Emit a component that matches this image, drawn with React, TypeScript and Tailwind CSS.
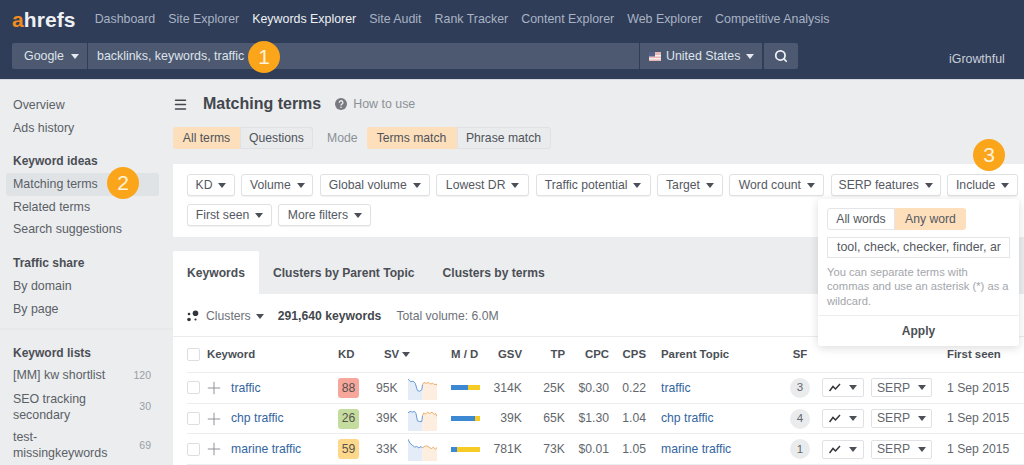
import React from "react";
import { Menu, Search, Plus } from "lucide-react";

const FONT = "[font-family:'Liberation_Sans',Arial,sans-serif]";
const ROW = "grid grid-cols-[20px_131px_38px_32px_43px_34px_37px_43px_44px_37px_139px_30px_56px_76px_77px]";

function Caret({ className = "text-[#4b5058]" }: { className?: string }) {
  return (
    <svg width="8" height="5" viewBox="0 0 8 5" className={`shrink-0 ${className}`}>
      <path d="M0 0h8L4 5z" fill="currentColor" />
    </svg>
  );
}

function Badge({ n, className }: { n: number; className: string }) {
  return (
    <div className={`absolute flex h-8 w-8 items-center justify-center rounded-full bg-[#fba51b] text-[21px] text-[#fff3dd] ${className}`}>
      {n}
    </div>
  );
}

function FilterBtn({ label, w }: { label: string; w: string }) {
  return (
    <div className={`flex h-[22px] items-center justify-center gap-[6px] rounded-[3px] border border-[#dfe1e4] bg-white text-[12.2px] text-[#55595f] shadow-[0_1px_1px_rgba(0,0,0,0.06)] ${w}`}>
      {label}
      <Caret />
    </div>
  );
}

function SideItem({ children, active, count }: { children: React.ReactNode; active?: boolean; count?: string }) {
  return (
    <div className={`-ml-[7px] flex h-[22.7px] w-[153px] items-center justify-between rounded-[3px] pl-[7px] pr-[8px] text-[12.4px] text-[#5b5f66] ${active ? "bg-[#e0e3e6]" : ""}`}>
      <span>{children}</span>
      {count && <span className="text-[10.5px] text-[#9a9ea4]">{count}</span>}
    </div>
  );
}

function SideHead({ children, className }: { children: React.ReactNode; className: string }) {
  return <div className={`flex h-[23px] items-center text-[12px] font-bold text-[#4b4f55] ${className}`}>{children}</div>;
}

function Spark({ variant }: { variant: number }) {
  const blue = [
    "M0 4 L4 8 L7 7 L10 10 L13 20 L16 21 L19 19 L20 12",
    "M0 8 L3 6 L6 7 L9 6 L11 9 L13 19 L16 20 L19 20 L20 12",
    "M0 3 L3 9 L6 11 L9 14 L12 13 L15 15 L18 13 L20 15",
  ][variant];
  const orange = [
    "M20 12 L22 9 L25 10 L28 9 L31 11 L34 10 L37 12 L39 11 L40 13",
    "M20 12 L22 8 L24 10 L27 7 L30 9 L33 7 L36 10 L38 9 L40 13",
    "M20 15 L23 13 L26 12 L29 14 L32 16 L35 14 L38 17 L40 14",
  ][variant];
  return (
    <svg width="29" height="24" viewBox="0 0 40 33" preserveAspectRatio="none">
      <path d={`${blue} V33 H0 Z`} fill="#e4edf7" />
      <path d={`${orange} V33 H20 Z`} fill="#fdeedf" />
      <path d={blue} fill="none" stroke="#5b94d6" strokeWidth="1.3" />
      <path d={orange} fill="none" stroke="#eda862" strokeWidth="1.3" />
    </svg>
  );
}

function Check() {
  return <div className="h-[13px] w-[13px] rounded-[2px] border border-[#dcdee1] bg-white" />;
}

function TrendBtn() {
  return (
    <div className="flex h-[19px] w-[42px] items-center justify-center gap-[8px] rounded-[2px] border border-[#dfe1e4]">
      <svg width="12" height="9" viewBox="0 0 12 9" fill="none" stroke="#33363b" strokeWidth="1.5">
        <path d="M0.5 8 L4 3.5 L6.5 6 L11 1" />
      </svg>
      <Caret />
    </div>
  );
}

const rows = [
  { k: "traffic", kd: "88", kdc: "bg-[#f6a69b]", sv: "95K", blue: 60, gsv: "314K", tp: "25K", cpc: "$0.30", cps: "0.22", sf: "3" },
  { k: "chp traffic", kd: "26", kdc: "bg-[#c5dc9f]", sv: "39K", blue: 83, gsv: "39K", tp: "65K", cpc: "$1.30", cps: "1.04", sf: "4" },
  { k: "marine traffic", kd: "59", kdc: "bg-[#fdd88a]", sv: "33K", blue: 20, gsv: "781K", tp: "73K", cpc: "$0.01", cps: "1.05", sf: "1" },
];

function Head({ children, className = "" }: { children: React.ReactNode; className?: string }) {
  return <div className={`flex items-center text-[11.4px] font-bold text-[#4b4f55] ${className}`}>{children}</div>;
}

export default function App() {
  const nav = ["Dashboard", "Site Explorer", "Keywords Explorer", "Site Audit", "Rank Tracker", "Content Explorer", "Web Explorer", "Competitive Analysis"];
  return (
    <div className={`relative h-[465px] w-[1024px] overflow-hidden bg-[#ebedef] ${FONT}`}>
      {/* Header */}
      <header className="h-[80px] border-b border-[#d5d9e0] bg-[#2f3d58]">
        <div className="flex h-[38px] items-center pl-[12px]">
          <div className="mr-[19px] flex text-[21px] font-bold leading-none tracking-[0.1px] text-[#eef0f3]">
            <span className="text-[#f08c21]">a</span>hrefs
          </div>
          <nav className="flex gap-[13px] text-[12.4px]">
            {nav.map((n) => (
              <span key={n} className={n === "Keywords Explorer" ? "text-[#eef0f4]" : "text-[#a9b3c4]"}>{n}</span>
            ))}
          </nav>
        </div>
        <div className="mt-[5px] flex h-[26px] pl-[12px] text-[12.4px] text-[#dfe3ea]">
          <div className="flex w-[75px] items-center gap-[7px] rounded-l-[2px] bg-[#4c5971] pl-[12px]">
            Google <Caret className="text-[#e6e9ee]" />
          </div>
          <div className="ml-px flex w-[551px] items-center bg-[#4c5971] pl-[9px]">backlinks, keywords, traffic</div>
          <div className="ml-px flex w-[122px] items-center gap-[5px] bg-[#4c5971] pl-[9px]">
            <svg width="12" height="9" viewBox="0 0 12 9" className="shrink-0">
              <rect width="12" height="9" fill="#e9b7b5" />
              <rect y="3" width="12" height="1.5" fill="#f5eeee" />
              <rect y="6" width="12" height="1.5" fill="#f5eeee" />
              <rect width="6" height="4.5" fill="#56618a" />
            </svg>
            United States
            <Caret className="ml-[1px] text-[#e6e9ee]" />
          </div>
          <div className="ml-[2px] flex w-[34px] items-center justify-center rounded-r-[2px] bg-[#4c5971]">
            <Search size={14} strokeWidth={3} className="text-[#eef0f4]" />
          </div>
          <div className="ml-[151px] mt-[7px] text-[12.4px] text-[#c9cfd9]">iGrowthful</div>
        </div>
      </header>

      <div className="flex">
        {/* Sidebar */}
        <aside className="flex h-[385px] w-[173px] shrink-0 flex-col pl-[13px] pt-[14px]">
          <SideItem>Overview</SideItem>
          <SideItem>Ads history</SideItem>
          <SideHead className="mt-[10.5px]">Keyword ideas</SideHead>
          <SideItem active>Matching terms</SideItem>
          <SideItem>Related terms</SideItem>
          <SideItem>Search suggestions</SideItem>
          <SideHead className="mt-[11px]">Traffic share</SideHead>
          <SideItem>By domain</SideItem>
          <SideItem>By page</SideItem>
          <div className="-ml-[13px] mt-[8px] h-[2px] bg-[#e6e8ea]" />
          <SideHead className="mt-[11px]">Keyword lists</SideHead>
          <SideItem count="120">[MM] kw shortlist</SideItem>
          <div className="mt-[5px] flex w-[138px] items-center justify-between text-[12.4px] leading-[15.5px] text-[#5b5f66]">
            <span>SEO tracking<br />secondary</span>
            <span className="-mt-[1px] text-[10.5px] text-[#9a9ea4]">30</span>
          </div>
          <div className="mt-[7px] flex w-[138px] items-center justify-between text-[12.4px] leading-[15.5px] text-[#5b5f66]">
            <span>test-<br />missingkeywords</span>
            <span className="text-[10.5px] text-[#9a9ea4]">69</span>
          </div>
        </aside>

        {/* Main */}
        <main className="min-w-0 flex-1">
          <div className="flex h-[47px] items-center pt-[1px]">
            <Menu size={15} strokeWidth={2.4} className="text-[#44484e]" />
            <h1 className="ml-[15px] text-[16px] font-bold text-[#43474d]">Matching terms</h1>
            <svg width="12" height="12" viewBox="0 0 12 12" className="ml-[14px]">
              <circle cx="6" cy="6" r="6" fill="#777b81" />
              <path d="M4.3 4.7a1.8 1.8 0 1 1 2.6 1.5c-.6.3-.9.6-.9 1.2" fill="none" stroke="#ebedef" strokeWidth="1.3" />
              <circle cx="6" cy="9.2" r=".8" fill="#ebedef" />
            </svg>
            <span className="ml-[6px] text-[12.4px] text-[#8d9197]">How to use</span>
          </div>

          <div className="flex h-[22px] items-center text-[12.2px] text-[#4f5359]">
            <div className="flex h-full w-[67px] items-center justify-center rounded-l-[3px] bg-[#fddfbc]">All terms</div>
            <div className="flex h-full w-[73px] items-center justify-center rounded-r-[3px] border border-[#dfe1e4] bg-[#e9ebed]">Questions</div>
            <span className="ml-[14px] text-[#8d9197]">Mode</span>
            <div className="ml-[9px] flex h-full w-[90px] items-center justify-center rounded-l-[3px] bg-[#fddfbc]">Terms match</div>
            <div className="flex h-full w-[94px] items-center justify-center rounded-r-[3px] border border-[#dfe1e4] bg-[#e9ebed]">Phrase match</div>
          </div>

          <section className="mt-[15px] flex h-[73px] flex-wrap content-start gap-x-[6.4px] gap-y-[8px] bg-white pl-[14px] pt-[10px]">
            <FilterBtn label="KD" w="w-[48px]" />
            <FilterBtn label="Volume" w="w-[72px]" />
            <FilterBtn label="Global volume" w="w-[110px]" />
            <FilterBtn label="Lowest DR" w="w-[93px]" />
            <FilterBtn label="Traffic potential" w="w-[115px]" />
            <FilterBtn label="Target" w="w-[66px]" />
            <FilterBtn label="Word count" w="w-[95px]" />
            <FilterBtn label="SERP features" w="w-[110px]" />
            <FilterBtn label="Include" w="w-[71px]" />
            <FilterBtn label="First seen" w="w-[85px]" />
            <FilterBtn label="More filters" w="w-[93px]" />
          </section>

          <div className="mt-[14px] flex h-[43px] items-center pt-[1px] text-[12.1px] font-bold text-[#4b4f55]">
            <div className="-mt-[1px] flex h-[43px] w-[86px] items-center justify-center rounded-t-[2px] bg-white pt-[1px]">Keywords</div>
            <span className="ml-[14px]">Clusters by Parent Topic</span>
            <span className="ml-[28px]">Clusters by terms</span>
          </div>

          <section className="bg-white">
            <div className="flex h-[43px] items-center border-b border-[#e9ebed] pl-[14px] pt-[2px] text-[12.2px]">
              <svg width="12" height="12" viewBox="0 0 12 12" className="mr-[7px]">
                <circle cx="8.5" cy="3.2" r="2.8" fill="#33363b" />
                <circle cx="2" cy="4" r="1.3" fill="#33363b" />
                <circle cx="2" cy="9.5" r="1.8" fill="#33363b" />
                <circle cx="8.5" cy="9.5" r="1.1" fill="#33363b" />
              </svg>
              <span className="text-[#6d7177]">Clusters</span>
              <Caret className="ml-[5px] text-[#4b5058]" />
              <span className="ml-[14px] font-bold text-[#44484e]">291,640 keywords</span>
              <span className="ml-[15px] text-[#6d7177]">Total volume: 6.0M</span>
            </div>

            <div className="pl-[14px]">
              <div className={`${ROW} h-[36px] border-b border-[#ebedef]`}>
                <div className="flex items-center"><Check /></div>
                <Head>Keyword</Head>
                <Head>KD</Head>
                <Head className="gap-[3px] pl-[8px]">SV <Caret /></Head>
                <div />
                <Head>M / D</Head>
                <Head className="justify-end">GSV</Head>
                <Head className="justify-end">TP</Head>
                <Head className="justify-end">CPC</Head>
                <Head className="justify-end">CPS</Head>
                <Head className="pl-[15px]">Parent Topic</Head>
                <Head className="justify-center">SF</Head>
                <div />
                <div />
                <Head>First seen</Head>
              </div>

              {rows.map((r, i) => (
                <div key={r.k} className={`${ROW} h-[30.7px] border-b border-[#ebedef] text-[12.2px] text-[#63676d]`}>
                  <div className="flex items-center"><Check /></div>
                  <div className="flex items-center">
                    <Plus size={20} strokeWidth={1.2} className="-ml-[3px] text-[#8f9297]" />
                    <a className="ml-[7px] text-[#33659f]">{r.k}</a>
                  </div>
                  <div className="flex items-center">
                    <span className={`flex h-[20px] w-[21px] items-center justify-center rounded-[3px] text-[#55534f] ${r.kdc}`}>{r.kd}</span>
                  </div>
                  <div className="flex items-center">{r.sv}</div>
                  <div className="flex items-center"><Spark variant={i} /></div>
                  <div className="flex items-center">
                    <div className="flex h-[5px] w-[29px]">
                      <div className="h-full bg-[#3d88d3]" style={{ width: `${r.blue}%` }} />
                      <div className="h-full flex-1 bg-[#f6cb25]" />
                    </div>
                  </div>
                  <div className="flex items-center justify-end">{r.gsv}</div>
                  <div className="flex items-center justify-end">{r.tp}</div>
                  <div className="flex items-center justify-end">{r.cpc}</div>
                  <div className="flex items-center justify-end">{r.cps}</div>
                  <div className="flex items-center pl-[15px]"><a className="text-[#33659f]">{r.k}</a></div>
                  <div className="flex items-center justify-center">
                    <span className="flex h-[20px] w-[20px] items-center justify-center rounded-full bg-[#e9ebed] text-[11.5px]">{r.sf}</span>
                  </div>
                  <div className="flex items-center pl-[7px]"><TrendBtn /></div>
                  <div className="flex items-center">
                    <div className="flex h-[19px] w-[61px] items-center justify-center gap-[8px] rounded-[2px] border border-[#dfe1e4]">SERP <Caret /></div>
                  </div>
                  <div className="flex items-center">1 Sep 2015</div>
                </div>
              ))}
            </div>
          </section>
        </main>
      </div>

      {/* Include popover */}
      <div className="absolute left-[818px] top-[199px] h-[147px] w-[201px] rounded-[3px] bg-white shadow-[0_2px_10px_rgba(0,0,0,0.14)]">
        <div className="ml-[9px] mt-[9px] flex h-[22px] text-[12.2px] text-[#55595f]">
          <div className="flex w-[68px] items-center justify-center rounded-l-[3px] border border-[#e3e5e8]">All words</div>
          <div className="flex w-[71px] items-center justify-center rounded-r-[3px] bg-[#fddfbc]">Any word</div>
        </div>
        <div className="ml-[9px] mt-[7px] flex h-[21px] w-[183px] items-center border border-[#e3e5e8] pl-[9px] text-[12.4px] text-[#55595f]">
          <span className="overflow-hidden whitespace-nowrap">tool, check, checker, finder, ar</span>
        </div>
        <p className="ml-[9px] mt-[7px] text-[11.2px] leading-[14.3px] text-[#a3a6ab]">
          You can separate terms with<br />commas and use an asterisk (*) as a<br />wildcard.
        </p>
        <div className="mt-[7px] flex h-[31px] items-center justify-center border-t border-[#ebedef] text-[12px] font-bold text-[#4b4f55]">Apply</div>
      </div>

      <Badge n={1} className="left-[248px] top-[41px]" />
      <Badge n={2} className="left-[107px] top-[167px]" />
      <Badge n={3} className="left-[973px] top-[139px]" />
    </div>
  );
}
